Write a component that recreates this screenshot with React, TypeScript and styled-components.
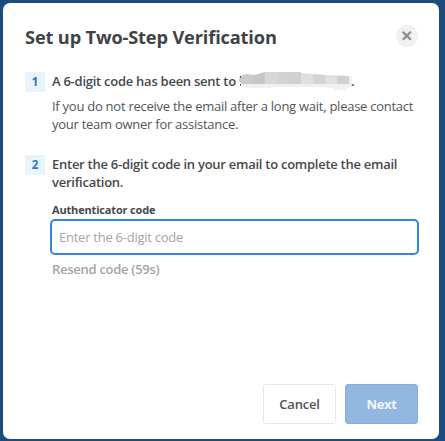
import React from "react";
import styled, { createGlobalStyle } from "styled-components";

const GlobalStyle = createGlobalStyle`
  * { box-sizing: border-box; }
  html, body { margin: 0; height: 100%; }
  body { background: #1e4b7f; overflow: hidden; font-family: "Open Sans", sans-serif; color: #45494d; }
  button, input { font-family: inherit; }
`;

const Backdrop = styled.div`
  height: 441px;
  width: 445px;
  padding: 3px 6px 2px 3px;
`;

const Dialog = styled.section`
  height: 436px;
  padding: 21px 21px 15px 22px;
  border-radius: 7px;
  background: #fff;
  display: flex;
  flex-direction: column;
`;

const Header = styled.header`
  display: flex;
  justify-content: space-between;
  height: 45px;
`;

const Title = styled.h1`
  margin: 0;
  font-size: 18.2px;
  line-height: 26px;
  font-weight: 700;
  letter-spacing: -0.14px;
  white-space: nowrap;
  color: #3f4347;
`;

const CloseButton = styled.button`
  width: 22px;
  height: 22px;
  margin-top: 1px;
  padding: 0;
  border: 0;
  border-radius: 50%;
  background: #eff0f1;
  display: grid;
  place-items: center;
`;

const Step = styled.div<{ $gap?: number }>`
  display: grid;
  grid-template-columns: 20px 1fr;
  column-gap: 7px;
  margin-top: ${(p) => p.$gap ?? 0}px;
`;

const StepNumber = styled.span`
  width: 20px;
  height: 20px;
  margin-top: 3px;
  background: #e9f3fc;
  color: #2b74cc;
  font-size: 11.5px;
  font-weight: 700;
  line-height: 19px;
  text-align: center;
`;

const StepTitle = styled.p`
  margin: 0;
  font-size: 13px;
  font-weight: 600;
  letter-spacing: -0.26px;
  line-height: 18px;
  padding-top: 3px;
  white-space: nowrap;
`;

const Hint = styled.p`
  margin: 7px 0 0;
  font-size: 13px;
  letter-spacing: -0.26px;
  line-height: 18px;
  white-space: nowrap;
  color: #515558;
`;

const Redaction = styled.svg`
  display: inline-block;
  width: 115px;
  height: 18px;
  vertical-align: top;
  margin: 0 -2px 0 -1px;
`;

const Label = styled.label`
  display: block;
  margin-top: 11px;
  font-size: 11px;
  font-weight: 700;
  letter-spacing: -0.17px;
  line-height: 15px;
`;

const CodeInput = styled.input`
  display: block;
  width: 369px;
  height: 36px;
  margin: 2px 0 0 -2px;
  padding: 0 7px;
  border: 2px solid #2f86e3;
  border-radius: 5px;
  outline: none;
  font-size: 13px;
  letter-spacing: -0.25px;
  &::placeholder { color: #a3a5a7; opacity: 1; }
`;

const Resend = styled.div`
  margin-top: 5px;
  font-size: 13px;
  font-weight: 600;
  letter-spacing: -0.28px;
  line-height: 18px;
  color: #a2a4a6;
`;

const Footer = styled.footer`
  display: flex;
  justify-content: flex-end;
  gap: 9px;
  margin-top: auto;
`;

const Button = styled.button<{ $primary?: boolean }>`
  width: 73px;
  height: 40px;
  padding: 0;
  border: 1px solid ${(p) => (p.$primary ? "#87afdc" : "#e6e7e8")};
  border-radius: 3px;
  background: ${(p) => (p.$primary ? "#92b7e1" : "#fff")};
  color: ${(p) => (p.$primary ? "#f1f6fc" : "#505458")};
  font-size: 13px;
  font-weight: ${(p) => (p.$primary ? 700 : 600)};
  letter-spacing: ${(p) => (p.$primary ? -0.4 : -0.22)}px;
`;

const blocks: [number, number, string][] = [
  [0, 15, "#c9cacc"], [15, 12, "#c6c7c9"], [27, 12, "#d6d7d9"],
  [39, 12, "#d2d3d5"], [51, 12, "#cfd0d2"], [63, 12, "#dedfe0"],
  [75, 12, "#d3d4d5"], [87, 12, "#dfe0e1"], [99, 12, "#d0d1d2"], [111, 4, "#f0f0f1"],
];

function HiddenAddress() {
  return (
    <Redaction viewBox="0 0 115 18" aria-label="Hidden email address">
      <defs>
        <clipPath id="smudge">
          <path d="M2 4 L8 2 L16 3 L27 0 L62 0 L64 1 L74 2 L88 3 L112 4 L114 5 L114 15 L109 16 L108 18 L98 18 L95 16 L80 15 L37 15 L30 16 L12 16 L5 14 L1 9 Z" />
        </clipPath>
      </defs>
      <g clipPath="url(#smudge)">
        <rect width="115" height="18" fill="#f0f0f0" />
        {blocks.map(([x, width, fill]) => (
          <rect key={x} x={x} width={width} height="12" fill={fill} />
        ))}
      </g>
      <path d="M2 4h1v2h-1zM2 12h1v2h-1z" fill="#55585b" />
    </Redaction>
  );
}

export default function App() {
  return (
    <>
      <GlobalStyle />
      <Backdrop>
        <Dialog role="dialog" aria-labelledby="dialog-title">
          <Header>
            <Title id="dialog-title">Set up Two-Step Verification</Title>
            <CloseButton aria-label="Close">
              <svg width="10" height="10" viewBox="0 0 10 10">
                <path d="M.8.8l8 8M8.8.8l-8 8" stroke="#8b8d8f" strokeWidth="2.3" />
              </svg>
            </CloseButton>
          </Header>
          <Step>
            <StepNumber>1</StepNumber>
            <div>
              <StepTitle>A 6-digit code has been sent to <HiddenAddress />.</StepTitle>
              <Hint>If you do not receive the email after a long wait, please contact<br />your team owner for assistance.</Hint>
            </div>
          </Step>
          <Step $gap={19}>
            <StepNumber>2</StepNumber>
            <div>
              <StepTitle>Enter the 6-digit code in your email to complete the email<br />verification.</StepTitle>
              <Label htmlFor="code">Authenticator code</Label>
              <CodeInput id="code" placeholder="Enter the 6-digit code" />
              <Resend>Resend code (59s)</Resend>
            </div>
          </Step>
          <Footer>
            <Button>Cancel</Button>
            <Button $primary disabled>Next</Button>
          </Footer>
        </Dialog>
      </Backdrop>
    </>
  );
}
